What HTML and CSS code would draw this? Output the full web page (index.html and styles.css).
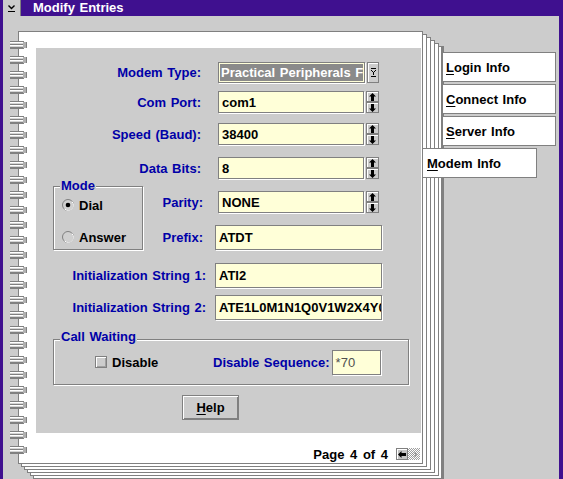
FILE: index.html
```html
<!DOCTYPE html>
<html>
<head>
<meta charset="utf-8">
<title>Modify Entries</title>
<link rel="stylesheet" href="styles.css">
</head>
<body>
<svg class="defs" width="0" height="0">
  <defs>
    <symbol id="ring" viewBox="0 0 17 8">
      <rect x="0" y="0" width="14" height="8" fill="#808080"/>
      <rect x="0" y="1" width="13" height="1" fill="#ffffff"/>
      <rect x="0" y="2" width="13" height="1" fill="#d4d4d4"/>
      <rect x="0" y="4" width="13" height="1" fill="#ffffff"/>
      <rect x="0" y="5" width="13" height="1" fill="#d4d4d4"/>
      <rect x="13" y="1" width="3" height="6" fill="#b0b0b0"/>
      <rect x="16" y="1" width="1" height="6" fill="#808080"/>
    </symbol>
    <symbol id="up" viewBox="0 0 7 8">
      <polygon points="3.5,0 7,3.5 5,3.5 5,8 2,8 2,3.5 0,3.5" fill="#000"/>
    </symbol>
    <symbol id="down" viewBox="0 0 7 8">
      <polygon points="3.5,8 7,4.5 5,4.5 5,0 2,0 2,4.5 0,4.5" fill="#000"/>
    </symbol>
  </defs>
</svg>
<div class="window">
  <div class="titlebar">
    <div class="sysmenu">
      <svg width="7" height="7" viewBox="0 0 7 7"><polyline points="0.5,0.5 3.5,3.5 6.5,0.5" fill="none" stroke="#000" stroke-width="1.4"/><rect x="0" y="6" width="7" height="1" fill="#000"/></svg>
    </div>
    <div class="title">Modify Entries</div>
  </div>
  <div class="client">
    <div class="book">
      <div class="sheet s5"></div>
      <div class="sheet s4"></div>
      <div class="sheet s3"></div>
      <div class="sheet s2"></div>
      <div class="sheet s1"></div>
      <div class="page">
        <div class="panel">
          <div class="lbl h21 r1">Modem Type:</div>
          <div class="combo r1">
            <div class="entry"><span class="hl">Practical Peripherals FaxModem 14400</span></div>
            <div class="dbtn"><svg width="5" height="9" viewBox="0 0 5 9"><rect x="0" y="0" width="5" height="1"/><rect x="0" y="2" width="1" height="1"/><rect x="4" y="2" width="1" height="1"/><rect x="1" y="3" width="1" height="1"/><rect x="3" y="3" width="1" height="1"/><rect x="2" y="4" width="1" height="3"/><rect x="0" y="8" width="5" height="1"/></svg></div>
          </div>

          <div class="lbl r2">Com Port:</div>
          <div class="spin r2">
            <div class="entry">com1</div>
            <div class="btns"><div class="sbtn"><svg width="7" height="8"><use href="#up"/></svg></div><div class="sbtn"><svg width="7" height="8"><use href="#down"/></svg></div></div>
          </div>

          <div class="lbl r3">Speed (Baud):</div>
          <div class="spin r3">
            <div class="entry">38400</div>
            <div class="btns"><div class="sbtn"><svg width="7" height="8"><use href="#up"/></svg></div><div class="sbtn"><svg width="7" height="8"><use href="#down"/></svg></div></div>
          </div>

          <div class="lbl r4">Data Bits:</div>
          <div class="spin r4">
            <div class="entry">8</div>
            <div class="btns"><div class="sbtn"><svg width="7" height="8"><use href="#up"/></svg></div><div class="sbtn"><svg width="7" height="8"><use href="#down"/></svg></div></div>
          </div>

          <div class="group mode">
            <span class="group-title">Mode</span>
            <div class="radio">
              <svg width="12" height="12" viewBox="0 0 12 12"><circle cx="6" cy="6" r="5.5" fill="#d0d0d0" stroke="#808080"/><path d="M2.6 9.9 A4.6 4.6 0 0 0 9.9 2.6" fill="none" stroke="#ffffff"/><circle cx="6" cy="6" r="2.3" fill="#000"/></svg>
              <span>Dial</span>
            </div>
            <div class="radio">
              <svg width="12" height="12" viewBox="0 0 12 12"><circle cx="6" cy="6" r="5.5" fill="#d0d0d0" stroke="#808080"/><path d="M2.6 9.9 A4.6 4.6 0 0 0 9.9 2.6" fill="none" stroke="#ffffff"/></svg>
              <span>Answer</span>
            </div>
          </div>

          <div class="lbl c3 r5">Parity:</div>
          <div class="spin r5">
            <div class="entry">NONE</div>
            <div class="btns"><div class="sbtn"><svg width="7" height="8"><use href="#up"/></svg></div><div class="sbtn"><svg width="7" height="8"><use href="#down"/></svg></div></div>
          </div>

          <div class="lbl c3 h25 r6">Prefix:</div>
          <div class="entry big r6">ATDT</div>

          <div class="lbl wide h25 r7">Initialization String 1:</div>
          <div class="entry big r7">ATI2</div>

          <div class="lbl wide h25 r8">Initialization String 2:</div>
          <div class="entry big r8">ATE1L0M1N1Q0V1W2X4Y0&amp;C1&amp;D2</div>

          <div class="group callwait">
            <span class="group-title">Call Waiting</span>
            <div class="cb-wrap">
              <span class="checkbox"></span>
              <span>Disable</span>
            </div>
            <span class="seq-lbl">Disable Sequence:</span>
            <div class="entry seq">*70</div>
          </div>

          <div class="help"><span><u>H</u>elp</span></div>
        </div>
        <div class="pagefoot">
          <span class="pagenum">Page 4 of 4</span>
          <span class="pbtn"><svg width="8" height="7" viewBox="0 0 8 7"><polygon points="0,3.5 3.5,0 3.5,2 8,2 8,5 3.5,5 3.5,7" fill="#000"/></svg></span>
          <span class="pbtn off"><svg width="6" height="5" viewBox="0 0 6 5"><polyline points="0.5,0.5 2.5,2.5 0.5,4.5" fill="none" stroke="#909090"/><polyline points="3.5,0.5 5.5,2.5 3.5,4.5" fill="none" stroke="#909090"/></svg></span>
        </div>
      </div>
      <div class="rings">
        <svg class="ring"><use href="#ring"/></svg><svg class="ring"><use href="#ring"/></svg><svg class="ring"><use href="#ring"/></svg><svg class="ring"><use href="#ring"/></svg>
        <svg class="ring"><use href="#ring"/></svg><svg class="ring"><use href="#ring"/></svg><svg class="ring"><use href="#ring"/></svg><svg class="ring"><use href="#ring"/></svg>
        <svg class="ring"><use href="#ring"/></svg><svg class="ring"><use href="#ring"/></svg><svg class="ring"><use href="#ring"/></svg><svg class="ring"><use href="#ring"/></svg>
        <svg class="ring"><use href="#ring"/></svg><svg class="ring"><use href="#ring"/></svg><svg class="ring"><use href="#ring"/></svg><svg class="ring"><use href="#ring"/></svg>
        <svg class="ring"><use href="#ring"/></svg><svg class="ring"><use href="#ring"/></svg><svg class="ring"><use href="#ring"/></svg><svg class="ring"><use href="#ring"/></svg>
        <svg class="ring"><use href="#ring"/></svg><svg class="ring"><use href="#ring"/></svg><svg class="ring"><use href="#ring"/></svg><svg class="ring"><use href="#ring"/></svg>
        <svg class="ring"><use href="#ring"/></svg><svg class="ring"><use href="#ring"/></svg><svg class="ring"><use href="#ring"/></svg><svg class="ring"><use href="#ring"/></svg>
      </div>
    </div>
    <div class="tabs">
      <div class="tab"><span><u>L</u>ogin Info</span></div>
      <div class="tab"><span><u>C</u>onnect Info</span></div>
      <div class="tab"><span><u>S</u>erver Info</span></div>
      <div class="tab sel"><span><u>M</u>odem Info</span></div>
    </div>
  </div>
</div>
</body>
</html>
```

FILE: styles.css
```css
* { box-sizing: border-box; }
html, body { margin: 0; padding: 0; }
body {
  width: 563px;
  height: 479px;
  overflow: hidden;
  background: #cccccc;
  font-family: "Liberation Sans", Arial, sans-serif;
  font-size: 13px;
  font-weight: bold;
  color: #000;
  word-spacing: 1px;
}
.defs { position: absolute; width: 0; height: 0; }
u { text-decoration: underline; text-underline-offset: 2px; text-decoration-thickness: 1px; }

.window {
  width: 563px;
  height: 479px;
  border-left: 3px solid #3f108f;
  border-right: 4px solid #3f108f;
  background: #cccccc;
  display: flex;
  flex-direction: column;
}
.titlebar {
  flex: none;
  height: 16px;
  background: #3f108f;
  display: flex;
  align-items: center;
}
.sysmenu {
  width: 18px;
  height: 16px;
  background: #cccccc;
  border-right: 1px solid #808080;
  display: flex;
  align-items: center;
  justify-content: center;
}
.title {
  color: #fff;
  margin-left: 12px;
  line-height: 16px;
}

.client {
  flex: 1;
  display: flex;
  padding: 15px 0 0 15px;
}
.book {
  position: relative;
  flex: none;
  width: 405px;
  height: 433px;
}
.sheet {
  position: absolute;
  height: 433px;
  background: #fff;
  border: 1px solid #808080;
}
.s1 { left: 3px; top: 3px; width: 406px; }
.s2 { left: 6px; top: 6px; width: 407px; }
.s3 { left: 9px; top: 9px; width: 408px; }
.s4 { left: 12px; top: 12px; width: 409px; }
.s5 { left: 15px; top: 15px; width: 411px; border-right: 3px solid #808080; }

.page {
  position: relative;
  width: 405px;
  height: 433px;
  background: #fff;
  border: 1px solid #808080;
  display: flex;
  flex-direction: column;
  padding: 16px 0 0 17px;
}
.rings {
  position: absolute;
  left: -8px;
  top: 10px;
  display: flex;
  flex-direction: column;
  gap: 7px;
  z-index: 2;
}
.ring { width: 17px; height: 8px; display: block; }

.panel {
  width: 385px;
  height: 386px;
  background: #cccccc;
  display: grid;
  grid-template-columns: 17px 90px 69px 170px;
  grid-template-rows: 29px 32px 34px 34px 34px 38px 32px 44px 56px 25px;
  align-items: start;
  padding-top: 14px;
}
.r1 { grid-row: 1; }
.r2 { grid-row: 2; }
.r3 { grid-row: 3; }
.r4 { grid-row: 4; }
.r5 { grid-row: 5; }
.r6 { grid-row: 6; }
.r7 { grid-row: 7; }
.r8 { grid-row: 8; }

.lbl {
  grid-column: 1 / 4;
  color: #0000a8;
  height: 22px;
  display: flex;
  align-items: center;
  justify-content: flex-end;
  padding-right: 11px;
  white-space: nowrap;
}
.lbl.h21 { height: 21px; }
.lbl.h25 { height: 25px; }
.lbl.c3 { grid-column: 3; padding-right: 9px; }
.lbl.wide { padding-right: 6px; }

.entry {
  background: #ffffd8;
  border: 1px solid #808080;
  box-shadow: 1px 1px 0 #ffffff;
  padding-left: 3px;
  white-space: nowrap;
  overflow: hidden;
  display: flex;
  align-items: center;
}
.entry.big {
  grid-column: 4;
  margin-left: 3px;
  width: 167px;
  height: 25px;
}

.combo {
  grid-column: 4;
  margin-left: 6px;
  display: flex;
  height: 21px;
}
.combo .entry {
  width: 147px;
  height: 21px;
  padding: 1px;
}
.combo .hl {
  display: flex;
  align-items: center;
  width: 100%;
  height: 100%;
  background: #8a8a8a;
  color: #fff;
  padding-left: 1px;
  overflow: hidden;
}
.dbtn {
  margin-left: 2px;
  width: 12px;
  height: 21px;
  background: #cccccc;
  border: 1px solid #808080;
  box-shadow: inset 1px 1px 0 #fff;
  display: flex;
  align-items: center;
  justify-content: center;
}

.spin {
  grid-column: 4;
  margin-left: 6px;
  display: flex;
  height: 22px;
}
.spin .entry {
  width: 146px;
  height: 22px;
}
.btns {
  margin-left: 2px;
  display: flex;
  flex-direction: column;
}
.sbtn {
  width: 13px;
  height: 11px;
  background: #cccccc;
  border: 1px solid #808080;
  box-shadow: inset 1px 1px 0 #fff;
  display: flex;
  align-items: center;
  justify-content: center;
}
.sbtn svg { display: block; }

.group {
  position: relative;
  border: 1px solid #808080;
  box-shadow: 1px 1px 0 #fff, inset 1px 1px 0 #fff;
}
.group-title {
  position: absolute;
  top: -8px;
  left: 6px;
  padding: 0 1px;
  background: #cccccc;
  color: #0000a8;
  line-height: 13px;
}
.mode {
  grid-column: 2;
  grid-row: 5 / span 2;
  margin-top: -5px;
  height: 64px;
  display: flex;
  flex-direction: column;
  gap: 16px;
  padding: 10px 0 0 8px;
}
.radio {
  display: flex;
  align-items: center;
  gap: 5px;
  height: 16px;
}
.radio svg { display: block; flex: none; }

.callwait {
  grid-column: 2 / 5;
  grid-row: 9;
  width: 356px;
  height: 46px;
  display: flex;
  align-items: center;
  padding-left: 41px;
}
.callwait .group-title { top: -10px; }
.cb-wrap {
  width: 118px;
  display: flex;
  align-items: center;
  gap: 5px;
}
.checkbox {
  width: 12px;
  height: 12px;
  background: #cccccc;
  border: 1px solid #808080;
  box-shadow: inset 1px 1px 0 #fff, inset -1px -1px 0 #a0a0a0;
}
.seq-lbl { color: #0000a8; white-space: nowrap; }
.entry.seq {
  margin-left: 2px;
  width: 49px;
  height: 25px;
  color: #505050;
  font-weight: normal;
}

.help {
  grid-column: 1 / -1;
  grid-row: 10;
  margin-left: 146px;
  width: 57px;
  height: 25px;
  background: #cccccc;
  border: 1px solid #808080;
  box-shadow: inset 1px 1px 0 #fff, inset -1px -1px 0 #808080;
  display: flex;
  align-items: center;
  justify-content: center;
}

.pagefoot {
  margin-top: 12px;
  height: 18px;
  display: flex;
  align-items: center;
  justify-content: flex-end;
  padding-right: 2px;
}
.pagenum { margin-right: 8px; word-spacing: 2px; }
.pbtn {
  width: 12px;
  height: 12px;
  background: #c4c4c4;
  border: 1px solid #808080;
  box-shadow: inset 1px 1px 0 #fff;
  display: flex;
  align-items: center;
  justify-content: center;
}
.pbtn.off {
  border: none;
  box-shadow: none;
  background: repeating-conic-gradient(#a0a0a0 0 25%, #ffffff 0 50%) 0 0 / 2px 2px;
}

.tabs {
  display: flex;
  flex-direction: column;
  align-items: flex-start;
  gap: 2px;
  margin: 21px 0 0 19px;
  width: 114px;
}
.tab {
  position: relative;
  z-index: 1;
  width: 114px;
  height: 30px;
  background: #fff;
  border: 1px solid #808080;
  display: flex;
  align-items: center;
  padding-left: 3px;
  white-space: nowrap;
}
.tab.sel {
  margin-left: -19px;
  border-left: none;
  padding-left: 4px;
}
```
